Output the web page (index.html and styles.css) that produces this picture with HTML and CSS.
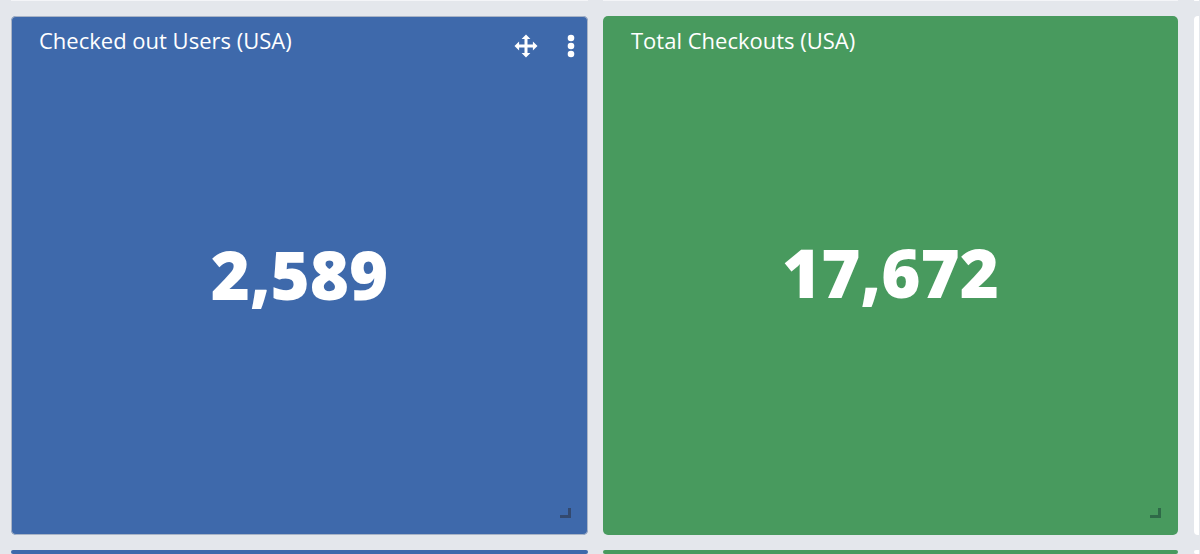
FILE: index.html
```html
<!DOCTYPE html>
<html lang="en">
<head>
    <meta charset="UTF-8">
    <title>Checkout dashboard</title>
    <link rel="stylesheet" href="styles.css">
</head>
<body>
    <div class="grid">
        <div class="stub"></div>
        <div class="stub"></div>
        <div class="stub stub-white"></div>

        <div class="tile tile-blue tile-active">
            <div class="tile-head">
                <span class="tile-title">Checked out Users (USA)</span>
                <div class="tile-tools">
                    <svg class="icon-move" width="24" height="24" viewBox="0 0 24 24" fill="#fff">
                        <path d="M12 0.5l4.4 4.6h-2.9V10.5h5.4V7.6l4.6 4.4-4.6 4.4v-2.9h-5.4v5.4h2.9L12 23.5l-4.4-4.6h2.9v-5.4H5.1v2.9L0.5 12l4.6-4.4v2.9h5.4V5.1H7.6z"/>
                    </svg>
                    <svg class="icon-dots" width="8" height="24" viewBox="0 0 8 24" fill="#fff">
                        <circle cx="4" cy="4" r="3.3"/>
                        <circle cx="4" cy="12" r="3.3"/>
                        <circle cx="4" cy="20" r="3.3"/>
                    </svg>
                </div>
            </div>
            <div class="tile-value">2,589</div>
            <span class="resize"></span>
        </div>

        <div class="tile tile-green">
            <div class="tile-head">
                <span class="tile-title">Total Checkouts (USA)</span>
            </div>
            <div class="tile-value">17,672</div>
            <span class="resize"></span>
        </div>

        <div class="stub stub-white"></div>

        <div class="tile tile-blue"></div>
        <div class="tile tile-green"></div>
        <div class="stub stub-white"></div>
    </div>
</body>
</html>
```

FILE: styles.css
```css
html, body {
    margin: 0;
    height: 554px;
    overflow: hidden;
}

body {
    background-color: #e4e7ec;
    font-family: "Open Sans", Arial, sans-serif;
    color: #ffffff;
}

.grid {
    display: grid;
    grid-template-columns: 577px 575px 6px;
    grid-template-rows: 1px 519px 4px;
    column-gap: 15px;
    row-gap: 15px;
    padding-left: 11px;
}

.stub {
    background-color: #f4f5f8;
}

.stub-white {
    background-color: #ffffff;
    border-radius: 4px 0 0 4px;
    margin-left: 1px;
}

.tile {
    display: flex;
    flex-direction: column;
    position: relative;
    box-sizing: border-box;
    border-radius: 5px;
    min-height: 0;
}

.tile-blue {
    background-color: #3e69ab;
}

.tile-green {
    background-color: #489a5e;
}

.tile-active {
    box-shadow: inset 0 0 0 1px #a9b4c6;
}

.tile-head {
    display: flex;
    justify-content: space-between;
    padding: 9px 13px 0 28px;
}

.tile-title {
    font-size: 22px;
    line-height: 30px;
}

.tile-tools {
    display: flex;
    align-items: flex-start;
    gap: 29px;
    padding-top: 9px;
}

.tile-value {
    flex: 1;
    display: flex;
    align-items: center;
    justify-content: center;
    font-size: 67px;
    font-weight: 800;
    padding-bottom: 46px;
}

.resize {
    position: absolute;
    right: 17px;
    bottom: 17px;
    width: 11px;
    height: 10px;
    border-right: 3px solid #33496f;
    border-bottom: 3px solid #33496f;
    box-sizing: border-box;
}

.tile-green .resize {
    border-color: #2f6a48;
}
```
